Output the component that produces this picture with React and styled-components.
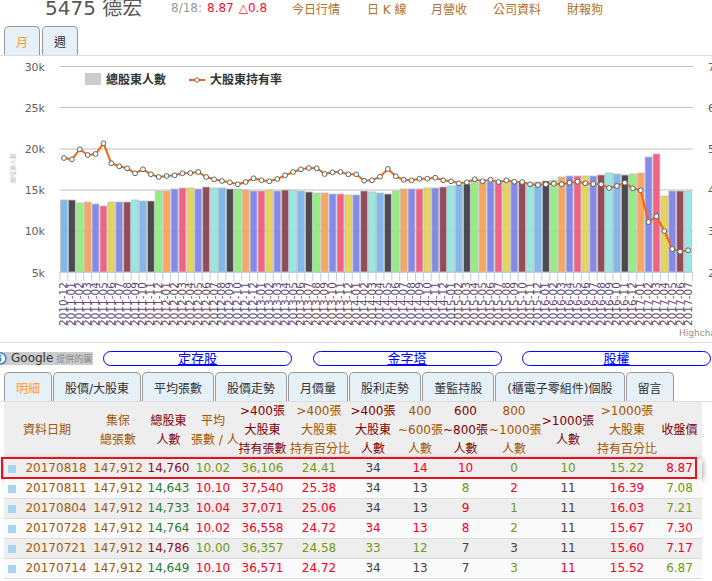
import React from "react";
import styled, { createGlobalStyle } from "styled-components";

const GlobalStyle = createGlobalStyle`
  html, body {
    margin: 0;
    padding: 0;
    height: 581px;
    overflow: hidden;
    background: #ffffff;
    font-family: "DejaVu Sans", "Noto Sans CJK TC", sans-serif;
    font-size: 12px;
  }
`;

const Page = styled.div`
  width: 712px;
  height: 581px;
  overflow: hidden;
`;

const Header = styled.div`
  display: flex;
  align-items: center;
  height: 16px;
  padding-left: 45px;
  margin-bottom: 10px;
`;

const Title = styled.div`
  font-size: 20px;
  line-height: 16px;
  color: #555555;
  width: 126px;
  flex: none;
  white-space: nowrap;
`;

const Quote = styled.div`
  width: 121px;
  flex: none;
  color: #999999;
  white-space: nowrap;
  span {
    color: #f01030;
    margin-left: 5px;
  }
`;

const NavLink = styled.a`
  color: #b06f28;
  width: ${(p) => p.$w}px;
  flex: none;
  white-space: nowrap;
`;

const TabBar = styled.div`
  display: flex;
  gap: ${(p) => p.$gap}px;
  height: 29px;
  padding: 0 0 0 4px;
  border-bottom: 1px solid #dddddd;
`;

const Tab = styled.div`
  display: flex;
  align-items: center;
  justify-content: center;
  padding: 0 ${(p) => p.$pad}px;
  background: #e6f0f7;
  border: 1px solid #999999;
  border-bottom: none;
  border-radius: 5px 5px 0 0;
  color: ${(p) => (p.$active ? "#ff9a30" : "#333333")};
  white-space: nowrap;
`;

const ChartBox = styled.div`
  height: 286px;
  border-bottom: 1px solid #dddddd;
  svg {
    display: block;
  }
`;

const LinkRow = styled.div`
  display: flex;
  align-items: center;
  gap: 20.5px;
  height: 28px;
  padding-top: 1px;
`;

const AdLabel = styled.div`
  display: flex;
  align-items: center;
  width: 93px;
  height: 13px;
  margin-right: -10.5px;
  flex: none;
  overflow: hidden;
  background: #cccccc;
  color: #333333;
  white-space: nowrap;
  svg {
    margin-left: -6px;
    margin-right: 4px;
    flex: none;
  }
  small {
    font-size: 9px;
    color: #888888;
    margin-left: 3px;
  }
`;

const Pill = styled.a`
  flex: none;
  width: 189px;
  height: 15px;
  box-sizing: border-box;
  border: 1px solid #0000ff;
  border-radius: 8px;
  color: #0000ff;
  text-align: center;
  text-decoration: underline;
  font-size: 13px;
  line-height: 14px;
`;

const TableWrap = styled.div`
  position: relative;
  width: 698px;
  margin-left: 4px;
`;

const Table = styled.table`
  width: 698px;
  table-layout: fixed;
  border-collapse: collapse;
  border-spacing: 0;
`;

const HeadCell = styled.th`
  height: 57px;
  padding: 0;
  background: #eeeeee;
  font-weight: normal;
  line-height: 19px;
  text-align: center;
  white-space: nowrap;
  color: ${(p) => (p.$dark ? "#800000" : "#a05500")};
`;

const Row = styled.tr`
  background: ${(p) => (p.$shade ? "#eeeeee" : "#fafafa")};
  box-shadow: ${(p) => (p.$picked ? "0 1px 6px #888888" : "none")};
`;

const Cell = styled.td`
  height: 19px;
  padding: 0;
  border-bottom: 1px solid #dddddd;
  text-align: center;
  white-space: nowrap;
  line-height: 19px;
  color: ${(p) => p.$color};
`;

const Marker = styled.span`
  display: block;
  width: 8px;
  height: 8px;
  margin-left: 4px;
  background: #a9d5f5;
`;

const RedBox = styled.div`
  position: absolute;
  left: -3px;
  top: 55px;
  width: 692px;
  height: 18px;
  border: 2px solid #e8101a;
  pointer-events: none;
`;

const BAR_COLORS = ["#7cb5ec", "#434348", "#90ed7d", "#f7a35c", "#8085e9", "#f15c80", "#e4d354", "#8085e8", "#8d4653", "#91e8e1"];

const BAR_TOPS = [
  200, 200, 203, 202, 204, 206, 202, 202, 202, 200, 201, 201, 191, 191, 189, 188, 188, 189, 187, 188,
  188, 189, 189, 190, 191, 191, 190, 191, 190, 190, 191, 192, 193, 193, 194, 194, 195, 195, 191, 192,
  193, 194, 191, 189, 189, 189, 188, 188, 187, 186, 185, 184, 182, 182, 182, 182, 182, 182, 182, 183,
  182, 181, 180, 177, 176, 176, 176, 176, 175, 173, 174, 175, 174, 173, 157, 154, 196, 191, 191, 191,
];

const LINE_YS = [
  158, 159.3, 149.3, 155, 154, 143.3, 163.3, 166.3, 168.3, 173.3, 169.3, 174.3, 177, 176, 175.3, 173.3, 173, 172, 177, 179.3,
  181, 182.3, 184.3, 182, 178.3, 180.3, 181.3, 179, 175.3, 172, 169.3, 168, 168.3, 174, 172.3, 172, 174.3, 174.3, 180.7, 180.3,
  176.7, 169, 176.3, 179.7, 180.3, 178.7, 178.7, 177.7, 180.3, 181.3, 183.3, 182.3, 179.3, 181.3, 179.7, 182, 180.3, 181.7, 182, 184.3,
  185, 184.3, 183.7, 184.3, 182.7, 181.7, 183.3, 184, 184.3, 188, 186, 182.7, 188.3, 190.3, 222, 216.3, 231, 249, 251.7, 250.3,
];

const PLOT_LEFT = 60;
const STEP = 7.9;
const BASE_Y = 272;

const monthLabel = (i) => {
  const total = 2010 * 12 + 11 + i;
  const month = (total % 12) + 1;
  return `${Math.floor(total / 12)}-${month < 10 ? "0" : ""}${month}`;
};

const LEFT_AXIS = [["30k", 66], ["25k", 107], ["20k", 148.5], ["15k", 189.5], ["10k", 230.5], ["5k", 272]];
const RIGHT_AXIS = [["70", 66], ["60", 107], ["50", 148.5], ["40", 189.5], ["30", 230.5], ["20", 272]];

function Chart() {
  const points = LINE_YS.map((y, i) => `${(PLOT_LEFT + (i + 0.5) * STEP).toFixed(1)},${y}`).join(" ");
  return (
    <svg width="712" height="286" viewBox="0 56 712 286" fontFamily='"DejaVu Sans", "Noto Sans CJK TC", sans-serif'>
      {LEFT_AXIS.slice(0, 5).map(([, y]) => (
        <line key={y} x1={PLOT_LEFT} x2="693" y1={y + 0.5} y2={y + 0.5} stroke="#c0c0c0" />
      ))}
      {BAR_TOPS.map((top, i) => (
        <rect
          key={i}
          x={PLOT_LEFT + i * STEP + 0.5}
          y={top}
          width={STEP - 1}
          height={BASE_Y - top}
          fill={BAR_COLORS[i % 10]}
          fillOpacity="0.96"
          stroke="#c0c0c0"
          strokeWidth="0.8"
        />
      ))}
      <line x1={PLOT_LEFT} x2="693" y1={BASE_Y + 0.5} y2={BASE_Y + 0.5} stroke="#c0d0e0" />
      {BAR_TOPS.map((_, i) => (
        <line key={i} x1={PLOT_LEFT + i * STEP} x2={PLOT_LEFT + i * STEP} y1={BASE_Y} y2="281" stroke="#c0d0e0" />
      ))}
      <line x1="692.5" x2="692.5" y1={BASE_Y} y2="281" stroke="#c0d0e0" />
      <polyline points={points} fill="none" stroke="#ff6000" strokeWidth="2" />
      {LINE_YS.map((y, i) => (
        <circle key={i} cx={PLOT_LEFT + (i + 0.5) * STEP} cy={y} r="2.4" fill="#ffffff" stroke="#4d6a6a" strokeWidth="1" />
      ))}
      {LEFT_AXIS.map(([t, y]) => (
        <text key={t} x="45" y={y + 4.5} textAnchor="end" fontSize="11" fill="#606060">{t}</text>
      ))}
      {RIGHT_AXIS.map(([t, y]) => (
        <text key={t} x="708" y={y + 4.5} fontSize="11" fill="#606060">{t}</text>
      ))}
      {BAR_TOPS.map((_, i) => {
        const x = PLOT_LEFT + (i + 0.5) * STEP + 3.5;
        return (
          <text key={i} transform={`translate(${x} 326) rotate(-90)`} fontSize="10.5" fill="#5f4a6e">{monthLabel(i)}</text>
        );
      })}
      <text transform="translate(15 183) rotate(-90)" fontSize="6" fill="#bbbbbb">總股東人數</text>
      <rect x="85" y="73" width="16" height="12" fill="#cccccc" />
      <text x="106" y="84" fontSize="12" fontWeight="bold" fill="#333333">總股東人數</text>
      <line x1="189" x2="205" y1="80" y2="80" stroke="#ff6000" strokeWidth="2" />
      <circle cx="197" cy="80" r="2.2" fill="#ffffff" stroke="#4d6a6a" />
      <text x="210" y="84" fontSize="12" fontWeight="bold" fill="#333333">大股東持有率</text>
      <text x="679" y="336" fontSize="9" fill="#909090">Highcharts.com</text>
    </svg>
  );
}

const COL_WIDTHS = [18, 68, 56, 45, 44, 55, 58, 50, 44, 47, 50, 58, 60, 45];

const HEADS = [
  { lines: ["資料日期"], span: 2 },
  { lines: ["集保", "總張數"] },
  { lines: ["總股東", "人數"], dark: true },
  { lines: ["平均", "張數 / 人"] },
  { lines: [">400張", "大股東", "持有張數"], dark: true },
  { lines: [">400張", "大股東", "持有百分比"] },
  { lines: [">400張", "大股東", "人數"], dark: true },
  { lines: ["400", "~600張", "人數"] },
  { lines: ["600", "~800張", "人數"], dark: true },
  { lines: ["800", "~1000張", "人數"] },
  { lines: [">1000張", "人數"], dark: true },
  { lines: [">1000張", "大股東", "持有百分比"] },
  { lines: ["收盤價"], dark: true },
];

const BROWN = "#a05a10";
const MAROON = "#8b0a2a";
const TEAL = "#2f7a3a";
const RED = "#f5001e";
const OLIVE = "#6f9a14";
const DARK = "#444444";

const ROWS = [
  [["20170818", BROWN], ["147,912", BROWN], ["14,760", MAROON], ["10.02", OLIVE], ["36,106", OLIVE], ["24.41", OLIVE], ["34", DARK], ["14", RED], ["10", RED], ["0", OLIVE], ["10", OLIVE], ["15.22", OLIVE], ["8.87", RED]],
  [["20170811", BROWN], ["147,912", BROWN], ["14,643", TEAL], ["10.10", RED], ["37,540", RED], ["25.38", RED], ["34", DARK], ["13", DARK], ["8", OLIVE], ["2", RED], ["11", DARK], ["16.39", RED], ["7.08", OLIVE]],
  [["20170804", BROWN], ["147,912", BROWN], ["14,733", TEAL], ["10.04", RED], ["37,071", RED], ["25.06", RED], ["34", DARK], ["13", DARK], ["9", RED], ["1", OLIVE], ["11", DARK], ["16.03", RED], ["7.21", OLIVE]],
  [["20170728", BROWN], ["147,912", BROWN], ["14,764", TEAL], ["10.02", RED], ["36,558", RED], ["24.72", RED], ["34", RED], ["13", RED], ["8", RED], ["2", OLIVE], ["11", DARK], ["15.67", RED], ["7.30", RED]],
  [["20170721", BROWN], ["147,912", BROWN], ["14,786", MAROON], ["10.00", OLIVE], ["36,357", OLIVE], ["24.58", OLIVE], ["33", OLIVE], ["12", OLIVE], ["7", DARK], ["3", DARK], ["11", DARK], ["15.60", RED], ["7.17", RED]],
  [["20170714", BROWN], ["147,912", BROWN], ["14,649", TEAL], ["10.10", RED], ["36,571", RED], ["24.72", RED], ["34", DARK], ["13", DARK], ["7", DARK], ["3", OLIVE], ["11", RED], ["15.52", RED], ["6.87", OLIVE]],
];

const NAV = [["今日行情", 75], ["日 K 線", 64], ["月營收", 62], ["公司資料", 74], ["財報狗", 40]];
const STOCK_TABS = ["明細", "股價/大股東", "平均張數", "股價走勢", "月價量", "股利走勢", "董監持股", "(櫃電子零組件)個股", "留言"];

export default function App() {
  return (
    <Page>
      <GlobalStyle />
      <Header>
        <Title>5475 德宏</Title>
        <Quote>
          8/18:<span>8.87</span><span>△0.8</span>
        </Quote>
        {NAV.map(([label, w]) => (
          <NavLink key={label} $w={w}>{label}</NavLink>
        ))}
      </Header>
      <TabBar $gap={2}>
        <Tab $pad={11} $active>月</Tab>
        <Tab $pad={11}>週</Tab>
      </TabBar>
      <ChartBox>
        <Chart />
      </ChartBox>
      <LinkRow>
        <AdLabel>
          <svg width="13" height="13" viewBox="0 0 13 13">
            <circle cx="6.5" cy="6.5" r="5.5" fill="#ffffff" stroke="#3a7fc0" strokeWidth="1.5" />
            <rect x="5.8" y="5.5" width="1.6" height="4" fill="#3a7fc0" />
            <rect x="5.8" y="3" width="1.6" height="1.6" fill="#3a7fc0" />
          </svg>
          Google<small>提供的廣告</small>
        </AdLabel>
        <Pill>定存股</Pill>
        <Pill>金字塔</Pill>
        <Pill>股權</Pill>
      </LinkRow>
      <TabBar $gap={1}>
        {STOCK_TABS.map((label, i) => (
          <Tab key={label} $pad={11} $active={i === 0}>{label}</Tab>
        ))}
      </TabBar>
      <TableWrap>
        <Table>
          <colgroup>
            {COL_WIDTHS.map((w, i) => (
              <col key={i} width={w} />
            ))}
          </colgroup>
          <thead>
            <tr>
              {HEADS.map((h, i) => (
                <HeadCell key={i} colSpan={h.span} $dark={h.dark}>
                  {h.lines.map((line, j) => (
                    <div key={j}>{line}</div>
                  ))}
                </HeadCell>
              ))}
            </tr>
          </thead>
          <tbody>
            {ROWS.map((cells, r) => (
              <Row key={r} $shade={r % 2 === 0} $picked={r === 0}>
                <Cell><Marker /></Cell>
                {cells.map(([value, color], c) => (
                  <Cell key={c} $color={color}>{value}</Cell>
                ))}
              </Row>
            ))}
          </tbody>
        </Table>
        <RedBox />
      </TableWrap>
    </Page>
  );
}
